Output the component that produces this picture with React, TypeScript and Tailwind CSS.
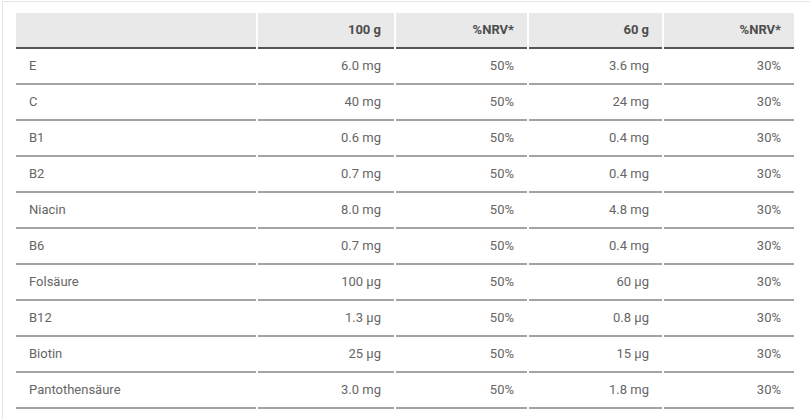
const rows = [
  ['E', '6.0 mg', '50%', '3.6 mg', '30%'],
  ['C', '40 mg', '50%', '24 mg', '30%'],
  ['B1', '0.6 mg', '50%', '0.4 mg', '30%'],
  ['B2', '0.7 mg', '50%', '0.4 mg', '30%'],
  ['Niacin', '8.0 mg', '50%', '4.8 mg', '30%'],
  ['B6', '0.7 mg', '50%', '0.4 mg', '30%'],
  ['Folsäure', '100 µg', '50%', '60 µg', '30%'],
  ['B12', '1.3 µg', '50%', '0.8 µg', '30%'],
  ['Biotin', '25 µg', '50%', '15 µg', '30%'],
  ['Pantothensäure', '3.0 mg', '50%', '1.8 mg', '30%'],
];

const headers = ['', '100 g', '%NRV*', '60 g', '%NRV*'];

export default function App() {
  return (
    <div
      className="w-[810px] h-[419px] bg-white pt-px overflow-hidden"
      style={{ fontFamily: 'Roboto, "Liberation Sans", sans-serif' }}
    >
      <div className="ml-[2px] h-full border-t border-l border-[#e6e6e6] pt-[11px] pl-[13px]">
        <div className="grid grid-cols-[240px_136px_131px_133px_130px] gap-x-[2px] text-[13px]">
          {headers.map((h, i) => (
            <div
              key={'h' + i}
              className="h-9 bg-[#e9e9e9] border-b-2 border-[#555] flex items-center justify-end pr-[13px] font-bold text-[#4d4d4d]"
            >
              {h}
            </div>
          ))}
          {rows.map((r) =>
            r.map((c, i) => (
              <div
                key={r[0] + i}
                className={
                  'h-9 border-b-2 border-[#a3a3a3] flex items-center text-[#666] ' +
                  (i === 0 ? 'pl-[13px]' : 'justify-end pr-[13px]')
                }
              >
                {c}
              </div>
            ))
          )}
        </div>
      </div>
    </div>
  );
}
